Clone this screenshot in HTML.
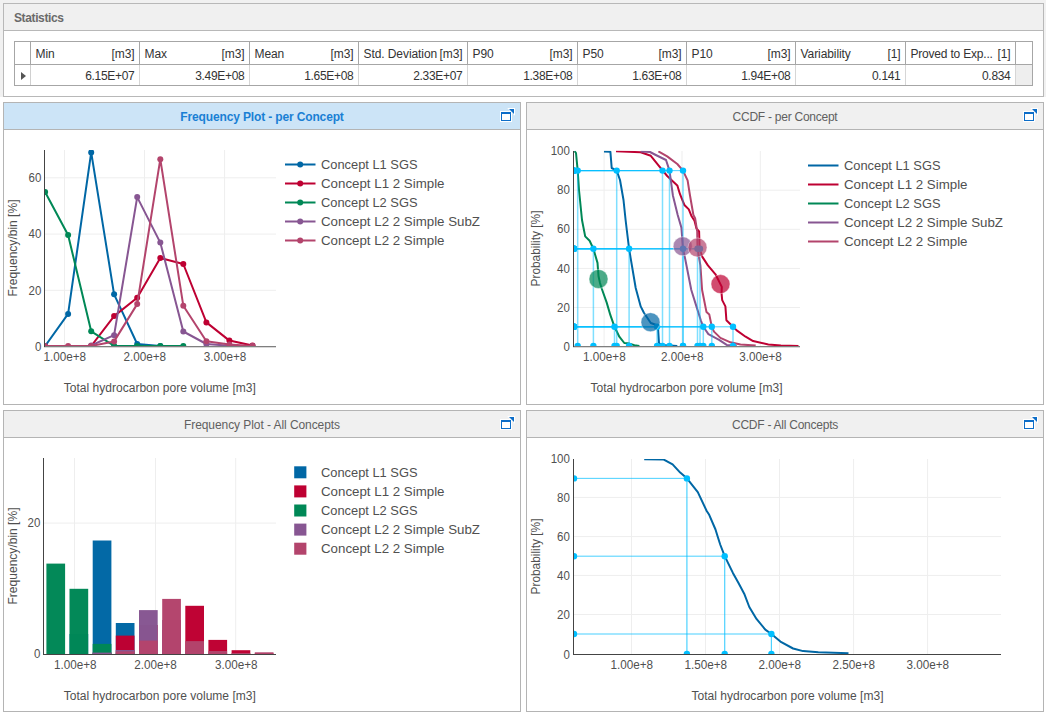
<!DOCTYPE html>
<html><head><meta charset="utf-8"><title>Statistics</title>
<style>
html,body{margin:0;padding:0;background:#fff}
body{width:1046px;height:714px;position:relative;overflow:hidden;font-family:"Liberation Sans",Arial,sans-serif;font-size:12px;color:#333}
.topbg{position:absolute;left:0;top:0;width:1046px;height:97px;background:#f1f1f1}
.st{position:absolute;left:3px;top:3px;width:1039px;height:92px;border:1px solid #b8b8b8;background:#fff}
.sth{height:26px;background:#f0f0f0;border-bottom:1px solid #b8b8b8;font-weight:bold;color:#6a6a6a;line-height:29px;padding-left:10px;letter-spacing:-0.38px}
.tb{position:absolute;left:10px;top:37px;width:1017px;height:43px;border:1px solid #a6a6a6;background:#fff}
.tb .hr{position:absolute;left:0;top:0;width:1017px;height:22px;border-bottom:1px solid #a6a6a6}
.tb .ind{position:absolute;left:0;top:0;width:15px;height:23px;border-right:1px solid #a6a6a6}
.tb .ind2{position:absolute;left:0;top:23px;width:15px;height:20px;border-right:1px solid #d0d0d0}
.tb .fill{position:absolute;left:1001px;top:23px;width:16px;height:20px;background:#eee}
.c{position:absolute;height:22px;border-right:1px solid #a6a6a6;line-height:24px;white-space:nowrap;color:#333}
.c.h{top:0}
.c.d{top:23px;height:20px;line-height:22px;border-right-color:#d6d6d6}
.c .l{position:absolute;left:4.5px;letter-spacing:-0.08px}
.c .r{position:absolute;right:4.5px;letter-spacing:-0.3px}
.c .u{letter-spacing:-0.1px}
.tri{position:absolute;left:6px;top:30px;width:0;height:0;border-left:5px solid #555;border-top:4px solid transparent;border-bottom:4px solid transparent}
.p{position:absolute;border:1px solid #b4b4b4;background:#fff;box-sizing:border-box}
.ph{height:26px;background:#f0f0f0;border-bottom:1px solid #b4b4b4;text-align:center;line-height:28px;color:#606060;position:relative}
.p.sel .ph{background:#cce4f7;color:#1a7fd4;font-weight:bold}
.ic{position:absolute;right:5px;top:5px}
.ch{position:absolute;left:0;top:27px;display:block}
</style></head><body>
<div class="topbg"></div><div class="st"><div class="sth">Statistics</div>
<div class="tb"><div class="hr"></div><div class="ind2"></div><div class="ind"></div><div class="fill"></div><div class="c h" style="left:16px;width:108px"><span class="l">Min</span><span class="r u">[m3]</span></div><div class="c h" style="left:125px;width:109px"><span class="l">Max</span><span class="r u">[m3]</span></div><div class="c h" style="left:235px;width:108px"><span class="l">Mean</span><span class="r u">[m3]</span></div><div class="c h" style="left:344px;width:108px"><span class="l">Std. Deviation</span><span class="r u">[m3]</span></div><div class="c h" style="left:453px;width:109px"><span class="l">P90</span><span class="r u">[m3]</span></div><div class="c h" style="left:563px;width:108px"><span class="l">P50</span><span class="r u">[m3]</span></div><div class="c h" style="left:672px;width:108px"><span class="l">P10</span><span class="r u">[m3]</span></div><div class="c h" style="left:781px;width:109px"><span class="l">Variability</span><span class="r u">[1]</span></div><div class="c h" style="left:891px;width:109px"><span class="l" style="letter-spacing:-0.2px">Proved to Exp...</span><span class="r u">[1]</span></div><div class="c d" style="left:16px;width:108px"><span class="r">6.15E+07</span></div><div class="c d" style="left:125px;width:109px"><span class="r">3.49E+08</span></div><div class="c d" style="left:235px;width:108px"><span class="r">1.65E+08</span></div><div class="c d" style="left:344px;width:108px"><span class="r">2.33E+07</span></div><div class="c d" style="left:453px;width:109px"><span class="r">1.38E+08</span></div><div class="c d" style="left:563px;width:108px"><span class="r">1.63E+08</span></div><div class="c d" style="left:672px;width:108px"><span class="r">1.94E+08</span></div><div class="c d" style="left:781px;width:109px"><span class="r">0.141</span></div><div class="c d" style="left:891px;width:109px"><span class="r">0.834</span></div><div class="tri"></div></div></div>
<div class="p sel" style="left:3px;top:102px;width:518px;height:303px"><div class="ph"><span style="letter-spacing:-0.14px">Frequency Plot - per Concept</span><svg class="ic" width="16" height="14" viewBox="0 0 16 14"><path d="M8.2 0H16V7.8z" fill="#fff"/><rect x="1" y="3" width="12" height="11" fill="#fff"/><path d="M2 4h10v9H2zM3 6v6h8V6z" fill="#0c6dc8" fill-rule="evenodd"/><path d="M10 1H15V6z" fill="#0c6dc8"/></svg></div><svg class="ch" width="518" height="275" viewBox="4 130 518 275" font-family="Liberation Sans, Arial, sans-serif"><rect x="64.0" y="150" width="1" height="196" fill="#eee"/><rect x="144.0" y="150" width="1" height="196" fill="#eee"/><rect x="224.1" y="150" width="1" height="196" fill="#eee"/><rect x="45" y="177.3" width="231" height="1" fill="#eee"/><rect x="45" y="233.6" width="231" height="1" fill="#eee"/><rect x="45" y="289.8" width="231" height="1" fill="#eee"/><clipPath id="c1"><rect x="45" y="150" width="231" height="196"/></clipPath><g clip-path="url(#c1)"><polyline points="45.1,346.0 68.1,313.9 91.2,152.4 114.1,294.3 137.2,344.0 160.3,346.0" fill="none" stroke="#0067A5" stroke-width="2" stroke-linejoin="round"/><circle cx="45.1" cy="346" r="3" fill="#0067A5"/><circle cx="68.1" cy="313.9" r="3" fill="#0067A5"/><circle cx="91.2" cy="152.4" r="3" fill="#0067A5"/><circle cx="114.1" cy="294.3" r="3" fill="#0067A5"/><circle cx="137.2" cy="344" r="3" fill="#0067A5"/><circle cx="160.3" cy="346" r="3" fill="#0067A5"/><polyline points="91.2,346.0 114.1,316.1 137.2,297.7 160.3,258.0 183.3,264.0 206.4,322.4 229.4,340.6 252.5,345.6" fill="none" stroke="#BE0032" stroke-width="2" stroke-linejoin="round"/><circle cx="91.2" cy="346" r="3" fill="#BE0032"/><circle cx="114.1" cy="316.1" r="3" fill="#BE0032"/><circle cx="137.2" cy="297.7" r="3" fill="#BE0032"/><circle cx="160.3" cy="258" r="3" fill="#BE0032"/><circle cx="183.3" cy="264" r="3" fill="#BE0032"/><circle cx="206.4" cy="322.4" r="3" fill="#BE0032"/><circle cx="229.4" cy="340.6" r="3" fill="#BE0032"/><circle cx="252.5" cy="345.6" r="3" fill="#BE0032"/><polyline points="45.1,192.0 68.1,235.0 91.2,331.3 114.1,345.8 137.2,346.0 160.3,346.0 183.3,346.0" fill="none" stroke="#008856" stroke-width="2" stroke-linejoin="round"/><circle cx="45.1" cy="192" r="3" fill="#008856"/><circle cx="68.1" cy="235" r="3" fill="#008856"/><circle cx="91.2" cy="331.3" r="3" fill="#008856"/><circle cx="114.1" cy="345.8" r="3" fill="#008856"/><circle cx="137.2" cy="346" r="3" fill="#008856"/><circle cx="160.3" cy="346" r="3" fill="#008856"/><circle cx="183.3" cy="346" r="3" fill="#008856"/><polyline points="91.2,345.5 114.1,335.2 137.2,197.1 160.3,242.6 183.3,331.5 206.4,344.0 229.4,345.8 252.5,346.0" fill="none" stroke="#875692" stroke-width="2" stroke-linejoin="round"/><circle cx="91.2" cy="345.5" r="3" fill="#875692"/><circle cx="114.1" cy="335.2" r="3" fill="#875692"/><circle cx="137.2" cy="197.1" r="3" fill="#875692"/><circle cx="160.3" cy="242.6" r="3" fill="#875692"/><circle cx="183.3" cy="331.5" r="3" fill="#875692"/><circle cx="206.4" cy="344" r="3" fill="#875692"/><circle cx="229.4" cy="345.8" r="3" fill="#875692"/><circle cx="252.5" cy="346" r="3" fill="#875692"/><polyline points="45.1,346.0 68.1,346.0 91.2,346.0 114.1,341.4 137.2,304.1 160.3,159.2 183.3,305.7 206.4,341.3 229.4,344.5 252.5,346.0" fill="none" stroke="#B3446C" stroke-width="2" stroke-linejoin="round"/><circle cx="45.1" cy="346" r="3" fill="#B3446C"/><circle cx="68.1" cy="346" r="3" fill="#B3446C"/><circle cx="91.2" cy="346" r="3" fill="#B3446C"/><circle cx="114.1" cy="341.4" r="3" fill="#B3446C"/><circle cx="137.2" cy="304.1" r="3" fill="#B3446C"/><circle cx="160.3" cy="159.2" r="3" fill="#B3446C"/><circle cx="183.3" cy="305.7" r="3" fill="#B3446C"/><circle cx="206.4" cy="341.3" r="3" fill="#B3446C"/><circle cx="229.4" cy="344.5" r="3" fill="#B3446C"/><circle cx="252.5" cy="346" r="3" fill="#B3446C"/></g><rect x="44" y="150" width="1" height="197" fill="#444"/><rect x="44" y="346.15" width="232" height="1.1" fill="#444" fill-opacity="0.8"/><text x="64.8" y="361" font-size="12" text-anchor="middle" fill="#505050" textLength="42.6" lengthAdjust="spacingAndGlyphs">1.00e+8</text><text x="144.8" y="361" font-size="12" text-anchor="middle" fill="#505050" textLength="42.6" lengthAdjust="spacingAndGlyphs">2.00e+8</text><text x="225" y="361" font-size="12" text-anchor="middle" fill="#505050" textLength="42.6" lengthAdjust="spacingAndGlyphs">3.00e+8</text><text x="41.4" y="182.10000000000002" font-size="12" text-anchor="end" fill="#505050" textLength="12.8" lengthAdjust="spacingAndGlyphs">60</text><text x="41.4" y="238.4" font-size="12" text-anchor="end" fill="#505050" textLength="12.8" lengthAdjust="spacingAndGlyphs">40</text><text x="41.4" y="294.6" font-size="12" text-anchor="end" fill="#505050" textLength="12.8" lengthAdjust="spacingAndGlyphs">20</text><text x="41.4" y="350.7" font-size="12" text-anchor="end" fill="#505050" textLength="6.4" lengthAdjust="spacingAndGlyphs">0</text><text transform="translate(17.3,248.0) rotate(-90)" font-size="12" text-anchor="middle" fill="#505050" textLength="97" lengthAdjust="spacingAndGlyphs">Frequency/bin [%]</text><text x="159.8" y="391.5" font-size="12" text-anchor="middle" fill="#505050" textLength="192" lengthAdjust="spacingAndGlyphs">Total hydrocarbon pore volume [m3]</text><rect x="285" y="163.5" width="30.5" height="2" fill="#0067A5"/><circle cx="300.2" cy="164.5" r="3" fill="#0067A5"/><text x="321" y="169.1" font-size="13" text-anchor="start" fill="#505050" textLength="96.5" lengthAdjust="spacingAndGlyphs">Concept L1 SGS</text><rect x="285" y="182.5" width="30.5" height="2" fill="#BE0032"/><circle cx="300.2" cy="183.5" r="3" fill="#BE0032"/><text x="321" y="188.1" font-size="13" text-anchor="start" fill="#505050" textLength="123.5" lengthAdjust="spacingAndGlyphs">Concept L1 2 Simple</text><rect x="285" y="201.5" width="30.5" height="2" fill="#008856"/><circle cx="300.2" cy="202.5" r="3" fill="#008856"/><text x="321" y="207.1" font-size="13" text-anchor="start" fill="#505050" textLength="96.5" lengthAdjust="spacingAndGlyphs">Concept L2 SGS</text><rect x="285" y="220.5" width="30.5" height="2" fill="#875692"/><circle cx="300.2" cy="221.5" r="3" fill="#875692"/><text x="321" y="226.1" font-size="13" text-anchor="start" fill="#505050" textLength="159" lengthAdjust="spacingAndGlyphs">Concept L2 2 Simple SubZ</text><rect x="285" y="239.5" width="30.5" height="2" fill="#B3446C"/><circle cx="300.2" cy="240.5" r="3" fill="#B3446C"/><text x="321" y="245.1" font-size="13" text-anchor="start" fill="#505050" textLength="123.5" lengthAdjust="spacingAndGlyphs">Concept L2 2 Simple</text></svg></div>
<div class="p" style="left:526px;top:102px;width:518px;height:303px"><div class="ph"><span style="letter-spacing:-0.25px">CCDF - per Concept</span><svg class="ic" width="16" height="14" viewBox="0 0 16 14"><path d="M8.2 0H16V7.8z" fill="#fff"/><rect x="1" y="3" width="12" height="11" fill="#fff"/><path d="M2 4h10v9H2zM3 6v6h8V6z" fill="#0c6dc8" fill-rule="evenodd"/><path d="M10 1H15V6z" fill="#0c6dc8"/></svg></div><svg class="ch" width="518" height="275" viewBox="527 130 518 275" font-family="Liberation Sans, Arial, sans-serif"><rect x="603.6" y="151" width="1" height="195" fill="#eee"/><rect x="681.5" y="151" width="1" height="195" fill="#eee"/><rect x="759.8" y="151" width="1" height="195" fill="#eee"/><rect x="574" y="189.7" width="226" height="1" fill="#eee"/><rect x="574" y="228.8" width="226" height="1" fill="#eee"/><rect x="574" y="267.9" width="226" height="1" fill="#eee"/><rect x="574" y="307.0" width="226" height="1" fill="#eee"/><clipPath id="c2"><rect x="574" y="150.7" width="226" height="195.3"/></clipPath><g clip-path="url(#c2)"><polyline points="604.0,151.4 610.4,151.8 611.7,168.0 616.7,170.6 620.0,180.0 623.5,200.0 625.6,220.0 626.8,230.0 629.1,248.8 630.6,257.8 635.7,288.0 640.7,306.4 643.9,312.7 650.8,323.0 657.1,325.3 658.1,329.1 659.0,343.0 660.9,344.9 677.3,345.9" fill="none" stroke="#0067A5" stroke-width="2" stroke-linejoin="round"/><polyline points="616.0,151.2 640.7,152.3 650.8,155.8 660.9,168.4 667.2,176.0 677.3,185.4 680.0,194.2 684.4,205.0 688.8,209.4 691.3,215.7 694.5,220.7 696.4,228.3 699.1,231.4 699.6,248.8 702.2,256.6 707.9,265.4 715.5,274.3 721.8,286.9 721.6,293.8 722.2,300.1 725.4,306.4 726.4,320.3 733.0,326.8 736.7,330.4 745.6,336.7 753.1,341.1 768.3,344.5 780.9,345.5 798.5,345.9" fill="none" stroke="#BE0032" stroke-width="2" stroke-linejoin="round"/><polyline points="574.5,151.0 576.0,153.0 577.7,170.6 579.0,190.0 582.0,220.0 585.2,236.4 589.6,240.8 593.4,248.8 597.5,262.9 598.5,276.0 600.0,283.0 601.7,288.5 606.7,302.6 610.4,315.2 614.5,326.8 619.3,336.7 624.3,343.0 629.4,343.6 634.4,345.2 639.4,345.9" fill="none" stroke="#008856" stroke-width="2" stroke-linejoin="round"/><polyline points="640.7,151.4 650.0,152.0 655.8,155.0 666.0,160.0 669.5,170.6 671.0,181.6 672.9,195.5 677.7,215.0 681.4,227.6 683.0,248.8 685.2,259.0 691.3,290.0 696.4,306.4 700.8,320.3 703.3,326.8 708.4,334.1 719.1,339.8 726.7,344.9 736.7,345.7" fill="none" stroke="#875692" stroke-width="2" stroke-linejoin="round"/><polyline points="658.4,151.4 667.2,156.4 677.3,164.0 683.0,170.6 687.6,180.4 690.0,195.5 693.4,215.0 695.1,218.2 697.2,231.4 697.5,248.8 700.4,265.4 702.1,290.0 706.5,312.1 709.3,314.6 711.8,326.8 714.0,331.6 720.4,337.9 730.4,342.3 740.5,344.5 755.7,345.6" fill="none" stroke="#B3446C" stroke-width="2" stroke-linejoin="round"/><rect x="574" y="170.05" width="42.7" height="1.1" fill="#00BFFF" fill-opacity="0.65"/><rect x="615.95" y="170.6" width="1.5" height="175.4" fill="#00BFFF" fill-opacity="0.5"/><rect x="574" y="248.25" width="55.1" height="1.1" fill="#00BFFF" fill-opacity="0.65"/><rect x="628.35" y="248.8" width="1.5" height="97.2" fill="#00BFFF" fill-opacity="0.5"/><rect x="574" y="326.25" width="83.1" height="1.1" fill="#00BFFF" fill-opacity="0.65"/><rect x="656.35" y="326.8" width="1.5" height="19.2" fill="#00BFFF" fill-opacity="0.5"/><rect x="574" y="170.05" width="88.5" height="1.1" fill="#00BFFF" fill-opacity="0.65"/><rect x="661.75" y="170.6" width="1.5" height="175.4" fill="#00BFFF" fill-opacity="0.5"/><rect x="574" y="248.25" width="126.0" height="1.1" fill="#00BFFF" fill-opacity="0.65"/><rect x="699.25" y="248.8" width="1.5" height="97.2" fill="#00BFFF" fill-opacity="0.5"/><rect x="574" y="326.25" width="159.0" height="1.1" fill="#00BFFF" fill-opacity="0.65"/><rect x="732.25" y="326.8" width="1.5" height="19.2" fill="#00BFFF" fill-opacity="0.5"/><rect x="574" y="170.05" width="3.7" height="1.1" fill="#00BFFF" fill-opacity="0.65"/><rect x="576.95" y="170.6" width="1.5" height="175.4" fill="#00BFFF" fill-opacity="0.5"/><rect x="574" y="248.25" width="19.4" height="1.1" fill="#00BFFF" fill-opacity="0.65"/><rect x="592.65" y="248.8" width="1.5" height="97.2" fill="#00BFFF" fill-opacity="0.5"/><rect x="574" y="326.25" width="40.5" height="1.1" fill="#00BFFF" fill-opacity="0.65"/><rect x="613.75" y="326.8" width="1.5" height="19.2" fill="#00BFFF" fill-opacity="0.5"/><rect x="574" y="170.05" width="95.5" height="1.1" fill="#00BFFF" fill-opacity="0.65"/><rect x="668.75" y="170.6" width="1.5" height="175.4" fill="#00BFFF" fill-opacity="0.5"/><rect x="574" y="248.25" width="109.0" height="1.1" fill="#00BFFF" fill-opacity="0.65"/><rect x="682.25" y="248.8" width="1.5" height="97.2" fill="#00BFFF" fill-opacity="0.5"/><rect x="574" y="326.25" width="129.3" height="1.1" fill="#00BFFF" fill-opacity="0.65"/><rect x="702.55" y="326.8" width="1.5" height="19.2" fill="#00BFFF" fill-opacity="0.5"/><rect x="574" y="170.05" width="109.0" height="1.1" fill="#00BFFF" fill-opacity="0.65"/><rect x="682.25" y="170.6" width="1.5" height="175.4" fill="#00BFFF" fill-opacity="0.5"/><rect x="574" y="248.25" width="123.5" height="1.1" fill="#00BFFF" fill-opacity="0.65"/><rect x="696.75" y="248.8" width="1.5" height="97.2" fill="#00BFFF" fill-opacity="0.5"/><rect x="574" y="326.25" width="137.8" height="1.1" fill="#00BFFF" fill-opacity="0.65"/><rect x="711.05" y="326.8" width="1.5" height="19.2" fill="#00BFFF" fill-opacity="0.5"/><circle cx="574" cy="170.6" r="3.2" fill="#00BFFF"/><circle cx="616.7" cy="170.6" r="3.2" fill="#00BFFF"/><circle cx="616.7" cy="346" r="3.2" fill="#00BFFF"/><circle cx="574" cy="248.8" r="3.2" fill="#00BFFF"/><circle cx="629.1" cy="248.8" r="3.2" fill="#00BFFF"/><circle cx="629.1" cy="346" r="3.2" fill="#00BFFF"/><circle cx="574" cy="326.8" r="3.2" fill="#00BFFF"/><circle cx="657.1" cy="326.8" r="3.2" fill="#00BFFF"/><circle cx="657.1" cy="346" r="3.2" fill="#00BFFF"/><circle cx="574" cy="170.6" r="3.2" fill="#00BFFF"/><circle cx="662.5" cy="170.6" r="3.2" fill="#00BFFF"/><circle cx="662.5" cy="346" r="3.2" fill="#00BFFF"/><circle cx="574" cy="248.8" r="3.2" fill="#00BFFF"/><circle cx="700" cy="248.8" r="3.2" fill="#00BFFF"/><circle cx="700" cy="346" r="3.2" fill="#00BFFF"/><circle cx="574" cy="326.8" r="3.2" fill="#00BFFF"/><circle cx="733" cy="326.8" r="3.2" fill="#00BFFF"/><circle cx="733" cy="346" r="3.2" fill="#00BFFF"/><circle cx="574" cy="170.6" r="3.2" fill="#00BFFF"/><circle cx="577.7" cy="170.6" r="3.2" fill="#00BFFF"/><circle cx="577.7" cy="346" r="3.2" fill="#00BFFF"/><circle cx="574" cy="248.8" r="3.2" fill="#00BFFF"/><circle cx="593.4" cy="248.8" r="3.2" fill="#00BFFF"/><circle cx="593.4" cy="346" r="3.2" fill="#00BFFF"/><circle cx="574" cy="326.8" r="3.2" fill="#00BFFF"/><circle cx="614.5" cy="326.8" r="3.2" fill="#00BFFF"/><circle cx="614.5" cy="346" r="3.2" fill="#00BFFF"/><circle cx="574" cy="170.6" r="3.2" fill="#00BFFF"/><circle cx="669.5" cy="170.6" r="3.2" fill="#00BFFF"/><circle cx="669.5" cy="346" r="3.2" fill="#00BFFF"/><circle cx="574" cy="248.8" r="3.2" fill="#00BFFF"/><circle cx="683" cy="248.8" r="3.2" fill="#00BFFF"/><circle cx="683" cy="346" r="3.2" fill="#00BFFF"/><circle cx="574" cy="326.8" r="3.2" fill="#00BFFF"/><circle cx="703.3" cy="326.8" r="3.2" fill="#00BFFF"/><circle cx="703.3" cy="346" r="3.2" fill="#00BFFF"/><circle cx="574" cy="170.6" r="3.2" fill="#00BFFF"/><circle cx="683" cy="170.6" r="3.2" fill="#00BFFF"/><circle cx="683" cy="346" r="3.2" fill="#00BFFF"/><circle cx="574" cy="248.8" r="3.2" fill="#00BFFF"/><circle cx="697.5" cy="248.8" r="3.2" fill="#00BFFF"/><circle cx="697.5" cy="346" r="3.2" fill="#00BFFF"/><circle cx="574" cy="326.8" r="3.2" fill="#00BFFF"/><circle cx="711.8" cy="326.8" r="3.2" fill="#00BFFF"/><circle cx="711.8" cy="346" r="3.2" fill="#00BFFF"/><circle cx="650.5" cy="322.2" r="9.5" fill="#0067A5" fill-opacity="0.7" stroke="#fff" stroke-opacity="0.7" stroke-width="0.6"/><circle cx="720.5" cy="284.1" r="9.5" fill="#BE0032" fill-opacity="0.7" stroke="#fff" stroke-opacity="0.7" stroke-width="0.6"/><circle cx="598.5" cy="279" r="9.5" fill="#008856" fill-opacity="0.7" stroke="#fff" stroke-opacity="0.7" stroke-width="0.6"/><circle cx="682.7" cy="246.3" r="9.5" fill="#875692" fill-opacity="0.7" stroke="#fff" stroke-opacity="0.7" stroke-width="0.6"/><circle cx="697.5" cy="247.5" r="9.5" fill="#B3446C" fill-opacity="0.7" stroke="#fff" stroke-opacity="0.7" stroke-width="0.6"/></g><rect x="573" y="151" width="1" height="196" fill="#444"/><rect x="573" y="346.15" width="227" height="1.1" fill="#444" fill-opacity="0.8"/><text x="604.4" y="361" font-size="12" text-anchor="middle" fill="#505050" textLength="42.6" lengthAdjust="spacingAndGlyphs">1.00e+8</text><text x="682.3" y="361" font-size="12" text-anchor="middle" fill="#505050" textLength="42.6" lengthAdjust="spacingAndGlyphs">2.00e+8</text><text x="760.5" y="361" font-size="12" text-anchor="middle" fill="#505050" textLength="42.6" lengthAdjust="spacingAndGlyphs">3.00e+8</text><text x="569.9" y="155.0" font-size="12" text-anchor="end" fill="#505050" textLength="19.2" lengthAdjust="spacingAndGlyphs">100</text><text x="569.9" y="194.10000000000002" font-size="12" text-anchor="end" fill="#505050" textLength="12.8" lengthAdjust="spacingAndGlyphs">80</text><text x="569.9" y="233.4" font-size="12" text-anchor="end" fill="#505050" textLength="12.8" lengthAdjust="spacingAndGlyphs">60</text><text x="569.9" y="272.5" font-size="12" text-anchor="end" fill="#505050" textLength="12.8" lengthAdjust="spacingAndGlyphs">40</text><text x="569.9" y="311.7" font-size="12" text-anchor="end" fill="#505050" textLength="12.8" lengthAdjust="spacingAndGlyphs">20</text><text x="569.9" y="350.7" font-size="12" text-anchor="end" fill="#505050" textLength="6.4" lengthAdjust="spacingAndGlyphs">0</text><text transform="translate(540,248.5) rotate(-90)" font-size="12" text-anchor="middle" fill="#505050" textLength="76" lengthAdjust="spacingAndGlyphs">Probability [%]</text><text x="686.5" y="391.5" font-size="12" text-anchor="middle" fill="#505050" textLength="192" lengthAdjust="spacingAndGlyphs">Total hydrocarbon pore volume [m3]</text><rect x="808" y="164.5" width="30.5" height="2" fill="#0067A5"/><text x="844" y="170.1" font-size="13" text-anchor="start" fill="#505050" textLength="96.5" lengthAdjust="spacingAndGlyphs">Concept L1 SGS</text><rect x="808" y="183.5" width="30.5" height="2" fill="#BE0032"/><text x="844" y="189.1" font-size="13" text-anchor="start" fill="#505050" textLength="123.5" lengthAdjust="spacingAndGlyphs">Concept L1 2 Simple</text><rect x="808" y="202.5" width="30.5" height="2" fill="#008856"/><text x="844" y="208.1" font-size="13" text-anchor="start" fill="#505050" textLength="96.5" lengthAdjust="spacingAndGlyphs">Concept L2 SGS</text><rect x="808" y="221.5" width="30.5" height="2" fill="#875692"/><text x="844" y="227.1" font-size="13" text-anchor="start" fill="#505050" textLength="159" lengthAdjust="spacingAndGlyphs">Concept L2 2 Simple SubZ</text><rect x="808" y="240.5" width="30.5" height="2" fill="#B3446C"/><text x="844" y="246.1" font-size="13" text-anchor="start" fill="#505050" textLength="123.5" lengthAdjust="spacingAndGlyphs">Concept L2 2 Simple</text></svg></div>
<div class="p" style="left:3px;top:410px;width:518px;height:302px"><div class="ph"><span style="letter-spacing:-0.07px">Frequency Plot - All Concepts</span><svg class="ic" width="16" height="14" viewBox="0 0 16 14"><path d="M8.2 0H16V7.8z" fill="#fff"/><rect x="1" y="3" width="12" height="11" fill="#fff"/><path d="M2 4h10v9H2zM3 6v6h8V6z" fill="#0c6dc8" fill-rule="evenodd"/><path d="M10 1H15V6z" fill="#0c6dc8"/></svg></div><svg class="ch" width="518" height="274" viewBox="4 438 518 274" font-family="Liberation Sans, Arial, sans-serif"><rect x="74.0" y="458" width="1" height="196" fill="#eee"/><rect x="155.0" y="458" width="1" height="196" fill="#eee"/><rect x="235.2" y="458" width="1" height="196" fill="#eee"/><rect x="44" y="522.6" width="232" height="1" fill="#eee"/><rect x="69.5" y="634" width="18.7" height="20.0" fill="#0067A5" fill-opacity="0.99"/><rect x="92.7" y="540.5" width="18.7" height="113.5" fill="#0067A5" fill-opacity="0.99"/><rect x="115.8" y="623" width="18.7" height="31.0" fill="#0067A5" fill-opacity="0.99"/><rect x="139.0" y="652.8" width="18.7" height="1.2" fill="#0067A5" fill-opacity="0.99"/><rect x="92.7" y="652.5" width="18.7" height="1.5" fill="#BE0032" fill-opacity="0.99"/><rect x="115.8" y="635.6" width="18.7" height="18.4" fill="#BE0032" fill-opacity="0.99"/><rect x="139.0" y="625" width="18.7" height="29.0" fill="#BE0032" fill-opacity="0.99"/><rect x="162.2" y="630" width="18.7" height="24.0" fill="#BE0032" fill-opacity="0.99"/><rect x="185.3" y="605.8" width="18.7" height="48.2" fill="#BE0032" fill-opacity="0.99"/><rect x="208.4" y="639.9" width="18.7" height="14.1" fill="#BE0032" fill-opacity="0.99"/><rect x="231.6" y="650.2" width="18.7" height="3.8" fill="#BE0032" fill-opacity="0.99"/><rect x="254.8" y="653.3" width="18.7" height="0.7" fill="#BE0032" fill-opacity="0.99"/><rect x="46.4" y="563.6" width="18.7" height="90.4" fill="#008856" fill-opacity="0.99"/><rect x="69.5" y="588.8" width="18.7" height="65.2" fill="#008856" fill-opacity="0.99"/><rect x="92.7" y="643.9" width="18.7" height="10.1" fill="#008856" fill-opacity="0.99"/><rect x="115.8" y="653.2" width="18.7" height="0.8" fill="#008856" fill-opacity="0.99"/><rect x="92.7" y="652.6" width="18.7" height="1.4" fill="#875692" fill-opacity="0.99"/><rect x="115.8" y="650" width="18.7" height="4.0" fill="#875692" fill-opacity="0.99"/><rect x="139.0" y="610.1" width="18.7" height="43.9" fill="#875692" fill-opacity="0.99"/><rect x="162.2" y="620" width="18.7" height="34.0" fill="#875692" fill-opacity="0.99"/><rect x="185.3" y="651.5" width="18.7" height="2.5" fill="#875692" fill-opacity="0.99"/><rect x="208.4" y="653" width="18.7" height="1.0" fill="#875692" fill-opacity="0.99"/><rect x="115.8" y="651.4" width="18.7" height="2.6" fill="#B3446C" fill-opacity="0.99"/><rect x="139.0" y="640.6" width="18.7" height="13.4" fill="#B3446C" fill-opacity="0.99"/><rect x="162.2" y="598.9" width="18.7" height="55.1" fill="#B3446C" fill-opacity="0.99"/><rect x="185.3" y="641.1" width="18.7" height="12.9" fill="#B3446C" fill-opacity="0.99"/><rect x="208.4" y="651" width="18.7" height="3.0" fill="#B3446C" fill-opacity="0.99"/><rect x="231.6" y="653" width="18.7" height="1.0" fill="#B3446C" fill-opacity="0.99"/><rect x="254.8" y="652.3" width="18.7" height="1.7" fill="#B3446C" fill-opacity="0.99"/><rect x="43" y="458" width="1" height="197" fill="#444"/><rect x="43" y="654" width="233" height="1" fill="#444"/><text x="75.3" y="669" font-size="12" text-anchor="middle" fill="#505050" textLength="42.6" lengthAdjust="spacingAndGlyphs">1.00e+8</text><text x="155.5" y="669" font-size="12" text-anchor="middle" fill="#505050" textLength="42.6" lengthAdjust="spacingAndGlyphs">2.00e+8</text><text x="236.2" y="669" font-size="12" text-anchor="middle" fill="#505050" textLength="42.6" lengthAdjust="spacingAndGlyphs">3.00e+8</text><text x="40.4" y="527.4" font-size="12" text-anchor="end" fill="#505050" textLength="12.8" lengthAdjust="spacingAndGlyphs">20</text><text x="40.4" y="658.0" font-size="12" text-anchor="end" fill="#505050" textLength="6.4" lengthAdjust="spacingAndGlyphs">0</text><text transform="translate(17.3,556.0) rotate(-90)" font-size="12" text-anchor="middle" fill="#505050" textLength="97" lengthAdjust="spacingAndGlyphs">Frequency/bin [%]</text><text x="159.8" y="699.5" font-size="12" text-anchor="middle" fill="#505050" textLength="192" lengthAdjust="spacingAndGlyphs">Total hydrocarbon pore volume [m3]</text><rect x="294.2" y="466.3" width="12.2" height="12" fill="#0067A5"/><text x="321" y="476.90000000000003" font-size="13" text-anchor="start" fill="#505050" textLength="96.5" lengthAdjust="spacingAndGlyphs">Concept L1 SGS</text><rect x="294.2" y="485.4" width="12.2" height="12" fill="#BE0032"/><text x="321" y="496.00000000000006" font-size="13" text-anchor="start" fill="#505050" textLength="123.5" lengthAdjust="spacingAndGlyphs">Concept L1 2 Simple</text><rect x="294.2" y="504.5" width="12.2" height="12" fill="#008856"/><text x="321" y="515.1" font-size="13" text-anchor="start" fill="#505050" textLength="96.5" lengthAdjust="spacingAndGlyphs">Concept L2 SGS</text><rect x="294.2" y="523.6" width="12.2" height="12" fill="#875692"/><text x="321" y="534.2" font-size="13" text-anchor="start" fill="#505050" textLength="159" lengthAdjust="spacingAndGlyphs">Concept L2 2 Simple SubZ</text><rect x="294.2" y="542.7" width="12.2" height="12" fill="#B3446C"/><text x="321" y="553.3000000000001" font-size="13" text-anchor="start" fill="#505050" textLength="123.5" lengthAdjust="spacingAndGlyphs">Concept L2 2 Simple</text></svg></div>
<div class="p" style="left:526px;top:410px;width:518px;height:302px"><div class="ph"><span style="letter-spacing:-0.25px">CCDF - All Concepts</span><svg class="ic" width="16" height="14" viewBox="0 0 16 14"><path d="M8.2 0H16V7.8z" fill="#fff"/><rect x="1" y="3" width="12" height="11" fill="#fff"/><path d="M2 4h10v9H2zM3 6v6h8V6z" fill="#0c6dc8" fill-rule="evenodd"/><path d="M10 1H15V6z" fill="#0c6dc8"/></svg></div><svg class="ch" width="518" height="274" viewBox="527 438 518 274" font-family="Liberation Sans, Arial, sans-serif"><rect x="631.0" y="459" width="1" height="195" fill="#eee"/><rect x="705.0" y="459" width="1" height="195" fill="#eee"/><rect x="779.0" y="459" width="1" height="195" fill="#eee"/><rect x="853.1" y="459" width="1" height="195" fill="#eee"/><rect x="927.1" y="459" width="1" height="195" fill="#eee"/><rect x="574" y="496.9" width="427" height="1" fill="#eee"/><rect x="574" y="536.1" width="427" height="1" fill="#eee"/><rect x="574" y="574.9" width="427" height="1" fill="#eee"/><rect x="574" y="614.0" width="427" height="1" fill="#eee"/><clipPath id="c4"><rect x="574" y="459.1" width="427" height="194.9"/></clipPath><g clip-path="url(#c4)"><polyline points="644.2,459.3 663.8,459.6 672.6,464.4 680.2,472.6 686.9,478.3 697.8,492.1 706.7,511.0 709.2,514.8 715.5,529.5 717.5,536.0 720.2,544.5 724.7,556.1 732.9,572.9 738.5,583.0 744.2,593.7 749.3,607.0 756.5,618.9 765.3,629.6 771.4,634.0 780.4,641.6 793.1,648.5 803.1,651.1 818.3,652.3 848.5,653.2" fill="none" stroke="#0067A5" stroke-width="2" stroke-linejoin="round"/><rect x="574" y="477.85" width="112.9" height="1.1" fill="#00BFFF" fill-opacity="0.65"/><rect x="686.30" y="478.4" width="1.2" height="175.6" fill="#00BFFF" fill-opacity="0.7"/><rect x="574" y="555.65" width="150.7" height="1.1" fill="#00BFFF" fill-opacity="0.65"/><rect x="724.10" y="556.2" width="1.2" height="97.8" fill="#00BFFF" fill-opacity="0.7"/><rect x="574" y="633.45" width="197.4" height="1.1" fill="#00BFFF" fill-opacity="0.65"/><rect x="770.80" y="634.0" width="1.2" height="20.0" fill="#00BFFF" fill-opacity="0.7"/><circle cx="574" cy="478.4" r="3.2" fill="#00BFFF"/><circle cx="686.9" cy="478.4" r="3.2" fill="#00BFFF"/><circle cx="686.9" cy="654" r="3.2" fill="#00BFFF"/><circle cx="574" cy="556.2" r="3.2" fill="#00BFFF"/><circle cx="724.7" cy="556.2" r="3.2" fill="#00BFFF"/><circle cx="724.7" cy="654" r="3.2" fill="#00BFFF"/><circle cx="574" cy="634" r="3.2" fill="#00BFFF"/><circle cx="771.4" cy="634" r="3.2" fill="#00BFFF"/><circle cx="771.4" cy="654" r="3.2" fill="#00BFFF"/></g><rect x="573" y="459" width="1" height="196" fill="#444"/><rect x="573" y="654" width="428" height="1" fill="#444"/><text x="631.8" y="669" font-size="12" text-anchor="middle" fill="#505050" textLength="42.6" lengthAdjust="spacingAndGlyphs">1.00e+8</text><text x="705.8" y="669" font-size="12" text-anchor="middle" fill="#505050" textLength="42.6" lengthAdjust="spacingAndGlyphs">1.50e+8</text><text x="779.8" y="669" font-size="12" text-anchor="middle" fill="#505050" textLength="42.6" lengthAdjust="spacingAndGlyphs">2.00e+8</text><text x="853.8" y="669" font-size="12" text-anchor="middle" fill="#505050" textLength="42.6" lengthAdjust="spacingAndGlyphs">2.50e+8</text><text x="927.8" y="669" font-size="12" text-anchor="middle" fill="#505050" textLength="42.6" lengthAdjust="spacingAndGlyphs">3.00e+8</text><text x="569.9" y="463.3" font-size="12" text-anchor="end" fill="#505050" textLength="19.2" lengthAdjust="spacingAndGlyphs">100</text><text x="569.9" y="501.7" font-size="12" text-anchor="end" fill="#505050" textLength="12.8" lengthAdjust="spacingAndGlyphs">80</text><text x="569.9" y="540.9" font-size="12" text-anchor="end" fill="#505050" textLength="12.8" lengthAdjust="spacingAndGlyphs">60</text><text x="569.9" y="579.6999999999999" font-size="12" text-anchor="end" fill="#505050" textLength="12.8" lengthAdjust="spacingAndGlyphs">40</text><text x="569.9" y="618.8" font-size="12" text-anchor="end" fill="#505050" textLength="12.8" lengthAdjust="spacingAndGlyphs">20</text><text x="569.9" y="658.6999999999999" font-size="12" text-anchor="end" fill="#505050" textLength="6.4" lengthAdjust="spacingAndGlyphs">0</text><text transform="translate(540,556.5) rotate(-90)" font-size="12" text-anchor="middle" fill="#505050" textLength="76" lengthAdjust="spacingAndGlyphs">Probability [%]</text><text x="787.5" y="699.5" font-size="12" text-anchor="middle" fill="#505050" textLength="192" lengthAdjust="spacingAndGlyphs">Total hydrocarbon pore volume [m3]</text></svg></div>
</body></html>
